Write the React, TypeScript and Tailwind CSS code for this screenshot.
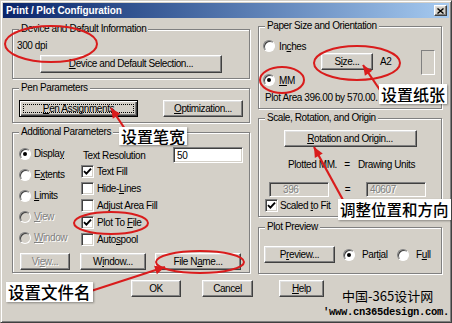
import type { ReactNode } from "react";

const bevel =
  "border border-t-white border-l-white border-r-[#404040] border-b-[#404040] shadow-[inset_-1px_-1px_0_#808080,inset_1px_1px_0_#dfdfdf]";
const sunken =
  "border border-t-[#808080] border-l-[#808080] border-r-white border-b-white shadow-[inset_1px_1px_0_#404040,inset_-1px_-1px_0_#d4d0c8]";
const grayed = "text-[#808080] [text-shadow:1px_1px_0_#fff]";
const cjk = "font-['Noto_Sans_CJK_SC','Noto_Sans',sans-serif] tracking-normal";

function U({ children }: { children: ReactNode }) {
  return <span className="underline underline-offset-[1px]">{children}</span>;
}

function Button({
  children,
  className = "",
  disabled = false,
}: {
  children: ReactNode;
  className?: string;
  disabled?: boolean;
}) {
  return (
    <button
      type="button"
      className={`flex shrink-0 items-center justify-center bg-[#d4d0c8] leading-[12px] ${bevel} ${
        disabled ? grayed : ""
      } ${className}`}
    >
      {children}
    </button>
  );
}

function FocusButton({ children, className = "" }: { children: ReactNode; className?: string }) {
  return (
    <button
      type="button"
      className={`flex shrink-0 bg-[#d4d0c8] p-[3px] leading-[10px] border border-black shadow-[inset_1px_1px_0_#fff,inset_-1px_-1px_0_#404040,inset_-2px_-2px_0_#808080] ${className}`}
    >
      <span className="flex flex-1 items-center justify-center border border-dotted border-black">
        {children}
      </span>
    </button>
  );
}

function Radio({ checked = false, disabled = false }: { checked?: boolean; disabled?: boolean }) {
  return (
    <span
      className={`flex h-[12px] w-[12px] shrink-0 items-center justify-center rounded-full border border-t-[#808080] border-l-[#808080] border-r-white border-b-white shadow-[inset_1px_1px_0_#404040] ${
        disabled ? "bg-[#d4d0c8]" : "bg-white"
      }`}
    >
      {checked && <span className="h-[4px] w-[4px] rounded-full bg-black" />}
    </span>
  );
}

function Check({ checked = false }: { checked?: boolean }) {
  return (
    <span className={`flex h-[13px] w-[13px] shrink-0 items-center justify-center bg-white ${sunken}`}>
      {checked && (
        <svg width="9" height="9" viewBox="0 0 9 9">
          <path d="M1 4.2 L3.4 6.6 L8 1.6" fill="none" stroke="#000" strokeWidth="1.9" />
        </svg>
      )}
    </span>
  );
}

function Group({ title, className = "", children }: { title: string; className?: string; children: ReactNode }) {
  return (
    <fieldset className={`border border-[#808080] shadow-[inset_1px_1px_0_#fff,1px_1px_0_#fff] ${className}`}>
      <legend className="ml-[6px] bg-[#d4d0c8] px-[2px] leading-[10px]">{title}</legend>
      {children}
    </fieldset>
  );
}

function RadioRow({ label, checked, disabled }: { label: ReactNode; checked?: boolean; disabled?: boolean }) {
  return (
    <div className="flex h-[21px] items-center gap-[3px]">
      <Radio checked={checked} disabled={disabled} />
      <span className={disabled ? grayed : ""}>{label}</span>
    </div>
  );
}

function CheckRow({ label, checked }: { label: ReactNode; checked?: boolean }) {
  return (
    <div className="flex h-[17px] items-center gap-[3px]">
      <Check checked={checked} />
      <span>{label}</span>
    </div>
  );
}

function arrowHead(tx: number, ty: number, fx: number, fy: number) {
  const a = Math.atan2(ty - fy, tx - fx);
  const len = 10;
  const w = 4.5;
  const bx = tx - len * Math.cos(a);
  const by = ty - len * Math.sin(a);
  const px = -Math.sin(a) * w;
  const py = Math.cos(a) * w;
  return `${tx},${ty} ${bx + px},${by + py} ${bx - px},${by - py}`;
}

const arrows = [
  { fx: 124, fy: 128, tx: 110, ty: 107 },
  { fx: 381, fy: 92, tx: 362, ty: 64 },
  { fx: 342, fy: 199, tx: 313, ty: 146 },
  { fx: 90, fy: 290, tx: 164, ty: 266 },
];

function Annotations() {
  const red = "#d91c1c";
  return (
    <>
      <svg className="pointer-events-none absolute inset-0" width="452" height="323" viewBox="0 0 452 323">
        <g fill="none" stroke={red} strokeWidth="2">
          <ellipse cx="50" cy="43" rx="46" ry="18" />
          <ellipse cx="281" cy="79" rx="22" ry="13" />
          <ellipse cx="356" cy="62" rx="43" ry="17" />
          <ellipse cx="110" cy="222" rx="37" ry="11" />
          <ellipse cx="199" cy="261" rx="44" ry="11" />
        </g>
        {arrows.map((a, i) => (
          <g key={i}>
            <line x1={a.fx} y1={a.fy} x2={a.tx} y2={a.ty} stroke={red} strokeWidth="2.2" />
            <polygon points={arrowHead(a.tx, a.ty, a.fx, a.fy)} fill={red} />
          </g>
        ))}
      </svg>
      <div className={`absolute left-[118px] top-[126px] bg-white px-[2px] text-[16px] font-medium leading-[18px] ${cjk} shadow-[1px_1px_2px_rgba(0,0,0,0.35)]`}>
        设置笔宽
      </div>
      <div className={`absolute left-[378px] top-[83px] bg-white px-[2px] text-[16px] font-medium leading-[20px] ${cjk} shadow-[1px_1px_2px_rgba(0,0,0,0.35)]`}>
        设置纸张
      </div>
      <div className={`absolute left-[337px] top-[198px] bg-white px-[2px] text-[15.5px] font-medium leading-[21px] ${cjk} shadow-[1px_1px_2px_rgba(0,0,0,0.35)]`}>
        调整位置和方向
      </div>
      <div className={`absolute left-[5px] top-[281px] bg-white px-[2px] text-[16.5px] font-medium leading-[20px] ${cjk} shadow-[1px_1px_2px_rgba(0,0,0,0.35)]`}>
        设置文件名
      </div>
      <div className={`absolute left-[341px] top-[288px] text-[13px] leading-[13px] ${cjk}`}>中国-365设计网</div>
      <div className="absolute left-[322px] top-[306px] font-['Liberation_Mono',monospace] text-[10.5px] font-bold leading-[11px] tracking-[-0.3px]">
        'www.cn365design.com.
      </div>
    </>
  );
}

export default function App() {
  return (
    <div
      className={`relative h-[323px] w-[452px] overflow-hidden border border-t-[#d4d0c8] border-l-[#d4d0c8] border-r-[#404040] border-b-[#404040] bg-[#d4d0c8] p-[2px] font-['Liberation_Sans',Arial,sans-serif] text-[10px] tracking-[-0.4px] text-black shadow-[inset_1px_1px_0_#fff,inset_-1px_-1px_0_#808080]`}
    >
      {/* title bar */}
      <div className="flex h-[15px] items-center justify-between bg-linear-to-r from-[#0a246a] to-[#a6caf0] pl-[3px] pr-[2px]">
        <span className="text-[10px] font-bold leading-[12px] tracking-[-0.1px] text-white">Print / Plot Configuration</span>
        <button type="button" className={`flex h-[11px] w-[13px] items-center justify-center bg-[#d4d0c8] ${bevel}`}>
          <svg width="7" height="6" viewBox="0 0 7 6">
            <path d="M0.5 0.5 L6.5 5.5 M6.5 0.5 L0.5 5.5" stroke="#000" strokeWidth="1.4" />
          </svg>
        </button>
      </div>

      {/* body */}
      <div className="flex items-start pl-[9px]">
        {/* left column */}
        <div className="mt-[6px] flex w-[238px] flex-col">
          <Group title="Device and Default Information" className="h-[55px]">
            <div className="mt-[6px] pl-[4px] leading-[12px]">300 dpi</div>
            <Button className="ml-[27px] mt-[3px] h-[18px] w-[182px]">
              <U>D</U>evice and Default Selection...
            </Button>
          </Group>

          <Group title="Pen Parameters" className="mt-[4px] h-[40px]">
            <div className="mt-[7px] flex pl-[6px]">
              <FocusButton className="h-[17px] w-[119px]">
                <U>P</U>en Assignments
              </FocusButton>
              <Button className="ml-[25px] h-[17px] w-[80px]">
                <U>O</U>ptimization...
              </Button>
            </div>
          </Group>

          <Group title="Additional Parameters" className="mt-[4px] h-[146px]">
            <div className="flex pl-[6px]">
              <div className="mt-[6px] flex w-[62px] flex-col">
                <RadioRow checked label={<>Displa<U>y</U></>} />
                <RadioRow label={<>E<U>x</U>tents</>} />
                <RadioRow label={<><U>L</U>imits</>} />
                <RadioRow disabled label={<><U>V</U>iew</>} />
                <RadioRow disabled label={<><U>W</U>indow</>} />
              </div>
              <div className="mt-[10px] flex flex-col">
                <div className="flex h-[16px] items-center">
                  <span className="w-[92px] pl-[2px]">Text Resolution</span>
                  <div className={`flex h-[16px] w-[70px] items-center bg-white pl-[3px] ${sunken}`}>50</div>
                </div>
                <CheckRow checked label="Text Fill" />
                <CheckRow label={<>Hide-<U>L</U>ines</>} />
                <CheckRow label="Adjust Area Fill" />
                <CheckRow checked label={<>Plot To <U>F</U>ile</>} />
                <CheckRow label={<>Auto<U>s</U>pool</>} />
              </div>
            </div>
            <div className="mt-[5px] flex pl-[7px]">
              <Button disabled className="h-[17px] w-[50px]">
                Vi<U>e</U>w...
              </Button>
              <Button className="ml-[10px] h-[17px] w-[66px]">
                W<U>i</U>ndow...
              </Button>
              <Button className="ml-[9px] h-[17px] w-[86px]">
                File N<U>a</U>me...
              </Button>
            </div>
          </Group>
        </div>

        {/* right column */}
        <div className="ml-[8px] mt-[3px] flex w-[184px] flex-col">
          <Group title="Paper Size and Orientation" className="h-[88px]">
            <div className="flex h-[58px]">
              <div className="flex w-[62px] flex-col pl-[4px]">
                <div className="mt-[9px] flex h-[12px] items-center gap-[4px]">
                  <Radio />
                  <span>
                    In<U>c</U>hes
                  </span>
                </div>
                <div className="mt-[22px] flex h-[12px] items-center gap-[4px]">
                  <Radio checked />
                  <span>
                    <U>M</U>M
                  </span>
                </div>
              </div>
              <Button className="mt-[22px] h-[17px] w-[52px]">
                S<U>i</U>ze...
              </Button>
              <div className="ml-[7px] mt-[22px] flex h-[17px] items-center">A2</div>
              <div className="ml-auto mr-[6px] mt-[19px] h-[25px] w-[14px] border border-t-[#808080] border-l-[#808080] border-r-white border-b-white" />
            </div>
            <div className="mt-[3px] pl-[6px] leading-[12px]">Plot Area 396.00 by 570.00.</div>
          </Group>

          <Group title="Scale, Rotation, and Origin" className="mt-[4px] h-[104px]">
            <Button className="mx-auto mt-[7px] h-[17px] w-[133px]">
              <U>R</U>otation and Origin...
            </Button>
            <div className="mt-[11px] flex h-[12px] items-center">
              <span className="ml-[29px] w-[53px]">Plotted MM.</span>
              <span className="w-[12px] text-center">=</span>
              <span className="ml-[5px]">Drawing Units</span>
            </div>
            <div className="mt-[12px] flex h-[15px] items-center">
              <div className={`ml-[10px] flex h-[15px] w-[60px] items-center pl-[13px] ${sunken} ${grayed}`}>396</div>
              <span className="w-[37px] text-center">=</span>
              <div className={`flex h-[15px] w-[60px] items-center pl-[3px] ${sunken} ${grayed}`}>40607</div>
            </div>
            <div className="mt-[2px] flex h-[13px] items-center gap-[2px] pl-[6px]">
              <Check checked />
              <span>
                Scaled <U>t</U>o Fit
              </span>
            </div>
          </Group>

          <Group title="Plot Preview" className="mt-[5px] h-[52px]">
            <div className="mt-[14px] flex h-[17px] items-center">
              <Button className="ml-[5px] h-[17px] w-[71px]">
                P<U>r</U>eview...
              </Button>
              <div className="ml-[8px] flex w-[54px] items-center gap-[7px]">
                <Radio checked />
                <span>
                  Part<U>i</U>al
                </span>
              </div>
              <div className="flex items-center gap-[7px]">
                <Radio />
                <span>
                  F<U>u</U>ll
                </span>
              </div>
            </div>
          </Group>
        </div>
      </div>

      {/* bottom buttons */}
      <div className="mt-[6px] flex pl-[128px]">
        <Button className="h-[17px] w-[50px]">OK</Button>
        <Button className="ml-[21px] h-[17px] w-[51px]">Cancel</Button>
        <Button className="ml-[26px] h-[17px] w-[45px]">
          <U>H</U>elp
        </Button>
      </div>

      <Annotations />
    </div>
  );
}
